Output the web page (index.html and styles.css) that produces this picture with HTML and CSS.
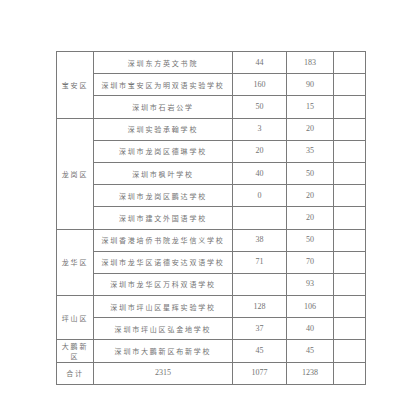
FILE: index.html
```html
<!DOCTYPE html>
<html lang="zh">
<head>
<meta charset="utf-8">
<link rel="stylesheet" href="styles.css">
</head>
<body>
<div class="page">
<table class="grid">
<colgroup><col class="c1"><col class="c2"><col class="c3"><col class="c4"><col class="c5"></colgroup>
<tbody>
<tr><td rowspan="3" class="dist">宝安区</td><td class="school">深圳东方英文书院</td><td class="num">44</td><td class="num">183</td><td></td></tr>
<tr><td class="school">深圳市宝安区为明双语实验学校</td><td class="num">160</td><td class="num">90</td><td></td></tr>
<tr><td class="school">深圳市石岩公学</td><td class="num">50</td><td class="num">15</td><td></td></tr>
<tr><td rowspan="5" class="dist">龙岗区</td><td class="school">深圳实验承翰学校</td><td class="num">3</td><td class="num">20</td><td></td></tr>
<tr><td class="school">深圳市龙岗区德琳学校</td><td class="num">20</td><td class="num">35</td><td></td></tr>
<tr><td class="school">深圳市枫叶学校</td><td class="num">40</td><td class="num">50</td><td></td></tr>
<tr><td class="school">深圳市龙岗区鹏达学校</td><td class="num">0</td><td class="num">20</td><td></td></tr>
<tr><td class="school">深圳市建文外国语学校</td><td class="num"></td><td class="num">20</td><td></td></tr>
<tr><td rowspan="3" class="dist">龙华区</td><td class="school">深圳香港培侨书院龙华信义学校</td><td class="num">38</td><td class="num">50</td><td></td></tr>
<tr><td class="school">深圳市龙华区诺德安达双语学校</td><td class="num">71</td><td class="num">70</td><td></td></tr>
<tr><td class="school">深圳市龙华区万科双语学校</td><td class="num"></td><td class="num">93</td><td></td></tr>
<tr><td rowspan="2" class="dist">坪山区</td><td class="school">深圳市坪山区星辉实验学校</td><td class="num">128</td><td class="num">106</td><td></td></tr>
<tr><td class="school">深圳市坪山区弘金地学校</td><td class="num">37</td><td class="num">40</td><td></td></tr>
<tr><td class="dist wrap">大鹏新区</td><td class="school">深圳市大鹏新区布新学校</td><td class="num">45</td><td class="num">45</td><td></td></tr>
<tr><td class="dist">合计</td><td class="num">2315</td><td class="num">1077</td><td class="num">1238</td><td></td></tr>
</tbody>
</table>
</div>
</body>
</html>
```
FILE: styles.css
```css
html, body {
  margin: 0;
  padding: 0;
  background: #ffffff;
}
.page {
  padding: 51px 0 0 56px;
}
.grid {
  border-collapse: collapse;
  table-layout: fixed;
  width: 309px;
  border: 1.5px solid #6a6a6a;
}
.c1 { width: 37px; }
.c2 { width: 139px; }
.c3 { width: 54px; }
.c4 { width: 47px; }
.c5 { width: 32px; }
.grid td {
  border: 1px solid #7a7a7a;
  height: 21.2px;
  padding: 0;
  text-align: center;
  vertical-align: middle;
  color: #737373;
  line-height: 10px;
}
.dist, .school {
  font-family: "Noto Sans CJK SC", sans-serif;
  font-size: 7px;
  letter-spacing: 1.8px;
}
.dist.wrap {
  padding: 0 4px;
  line-height: 10px;
}
.num {
  font-family: "Liberation Serif", serif;
  font-size: 8px;
  letter-spacing: 0;
}
```
